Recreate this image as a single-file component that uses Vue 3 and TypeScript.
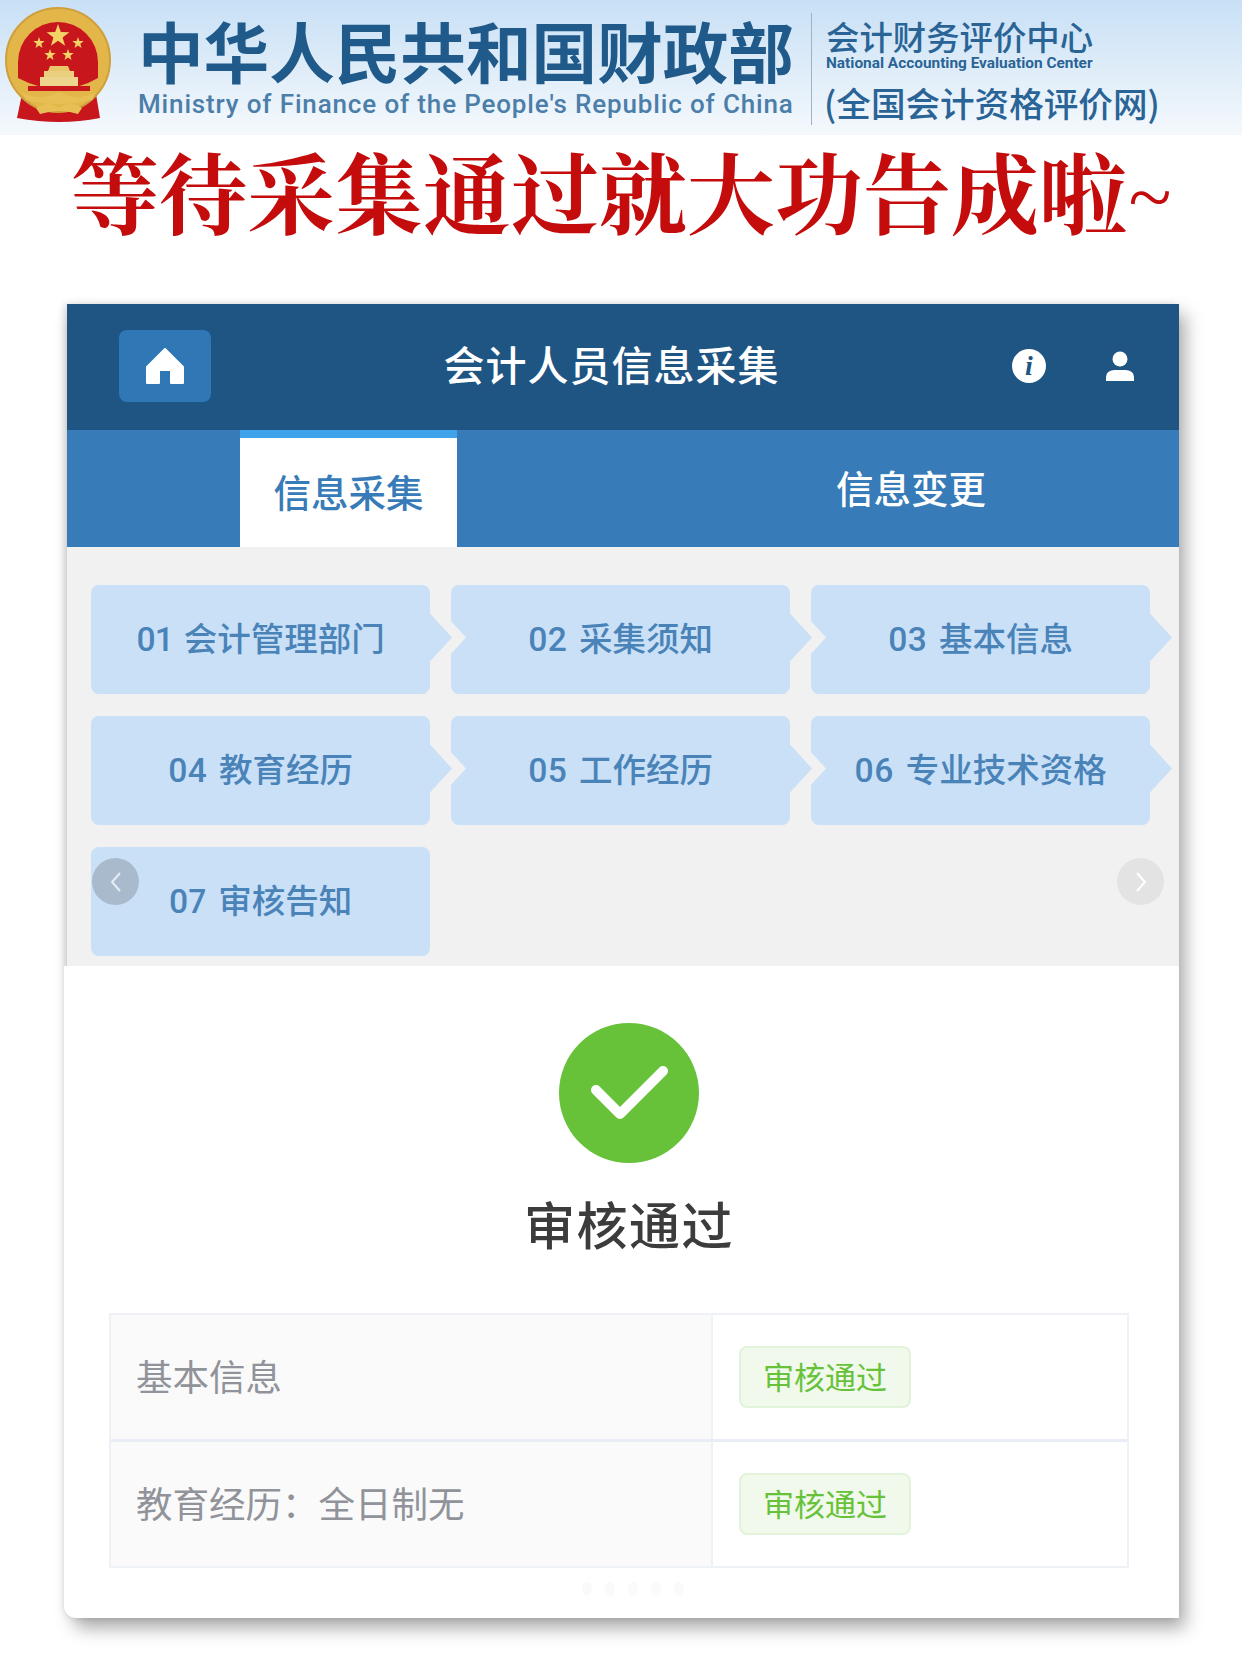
<script setup lang="ts">
const steps: string[] = [
  '01 会计管理部门',
  '02 采集须知',
  '03 基本信息',
  '04 教育经历',
  '05 工作经历',
  '06 专业技术资格',
  '07 审核告知'
]
const rows: string[] = ['基本信息', '教育经历：全日制无']
const smallStars: number[][] = [[39, 43], [78, 43], [50, 55], [68, 55]]
const starPoints = (cx: number, cy: number, r: number): string => {
  const pts: string[] = []
  for (let i = 0; i < 10; i++) {
    const rad = i % 2 === 0 ? r : r * 0.4
    const a = -Math.PI / 2 + (i * Math.PI) / 5
    pts.push(`${(cx + rad * Math.cos(a)).toFixed(1)},${(cy + rad * Math.sin(a)).toFixed(1)}`)
  }
  return pts.join(' ')
}
</script>

<template>
  <div class="page">
    <header class="banner">
      <svg class="emblem" viewBox="0 0 120 125" width="120" height="125" aria-hidden="true">
        <path d="M22 92 L17 116 Q60 124 100 116 L96 92 Z" fill="#c8161d" />
        <circle cx="58" cy="58" r="52" fill="#e3b64a" />
        <circle cx="58" cy="58" r="52" fill="none" stroke="#cf9f3c" stroke-width="2" />
        <path d="M18 60 A40 40 0 1 1 98 60 L98 76 Q60 98 18 76 Z" fill="#c8161d" />
        <polygon :points="starPoints(58, 34, 12)" fill="#f3d266" />
        <polygon v-for="(s, i) in smallStars" :key="i" :points="starPoints(s[0], s[1] - 2, 6)" fill="#f3d266" />
        <path d="M50 64 H68 L70 69 H48 Z" fill="#e9c66a" />
        <rect x="44" y="69" width="30" height="6" fill="#e9cf7e" />
        <rect x="40" y="75" width="38" height="9" fill="#edd58d" />
        <rect x="28" y="84" width="62" height="5" fill="#c8161d" />
        <path d="M22 90 Q40 100 59 90 Q78 100 96 90 L92 98 Q60 106 26 98 Z" fill="#e7bf55" />
        <path d="M36 106 Q48 98 59 106 Q70 98 82 106 L78 112 Q60 106 40 112 Z" fill="#e7bf55" />
      </svg>
      <div class="ministry">
        <div class="ministry-cn">中华人民共和国财政部</div>
        <div class="ministry-en">Ministry of Finance of the People's Republic of China</div>
      </div>
      <div class="divider"></div>
      <div class="center">
        <div class="center-cn">会计财务评价中心</div>
        <div class="center-en">National Accounting Evaluation Center</div>
        <div class="center-net">(全国会计资格评价网)</div>
      </div>
    </header>

    <h1 class="headline">等待采集通过就大功告成啦<span class="tilde">~</span></h1>

    <section class="panel">
      <div class="topbar">
        <div class="home">
          <svg viewBox="0 0 40 38" width="40" height="38" aria-hidden="true">
            <path d="M20 2 L38 20 V36 H26 V23 H14 V36 H2 V20 Z" fill="#fff" stroke="#fff" stroke-width="2" stroke-linejoin="round" />
          </svg>
        </div>
        <div class="app-title">会计人员信息采集</div>
        <div class="info"><span>i</span></div>
        <svg class="user" viewBox="0 0 30 30" width="30" height="30" aria-hidden="true">
          <circle cx="15" cy="8" r="7.5" fill="#fff" />
          <path d="M1 30 V26 Q1 20 9 19 H21 Q29 20 29 26 V30 Z" fill="#fff" />
        </svg>
      </div>

      <div class="tabs">
        <div class="tab-active">信息采集</div>
        <div class="tab-idle">信息变更</div>
      </div>

      <div class="steps">
        <div v-for="(s, i) in steps" :key="s" class="step" :class="{ 'step-end': i === steps.length - 1 }">{{ s }}</div>
        <div class="nav nav-prev">
          <svg viewBox="0 0 12 22" width="12" height="22" aria-hidden="true"><path d="M10 2 L2 11 L10 20" fill="none" stroke="#e8edf3" stroke-width="2" /></svg>
        </div>
        <div class="nav nav-next">
          <svg viewBox="0 0 12 22" width="12" height="22" aria-hidden="true"><path d="M2 2 L10 11 L2 20" fill="none" stroke="#fff" stroke-width="2" /></svg>
        </div>
      </div>

      <div class="result">
        <svg class="ok" viewBox="0 0 140 140" width="140" height="140" aria-hidden="true">
          <circle cx="70" cy="70" r="70" fill="#67c23a" />
          <path d="M37 67 L61 91 L104 48" fill="none" stroke="#fff" stroke-width="10" stroke-linecap="round" stroke-linejoin="round" />
        </svg>
        <div class="result-text">审核通过</div>
        <div class="table">
          <div v-for="r in rows" :key="r" class="row">
            <div class="cell-name">{{ r }}</div>
            <div class="cell-state"><span class="tag">审核通过</span></div>
          </div>
        </div>
        <div class="dots"><i></i><i></i><i></i><i></i><i></i></div>
      </div>
    </section>
  </div>
</template>

<style scoped>
.page {
  width: 1242px;
  height: 1656px;
  background: #fff;
  overflow: hidden;
  font-family: "Noto Sans CJK SC", "Noto Sans", sans-serif;
}
.banner {
  height: 135px;
  display: flex;
  align-items: flex-start;
  background: linear-gradient(180deg, #c8e0f6 0%, #dcebf8 45%, #f5f9fd 100%);
  color: #1f5a8a;
}
.emblem { flex: none; margin: 2px 18px 0 0; }
.ministry { padding-top: 14px; width: 656px; }
.ministry-cn {
  font-size: 65.6px;
  line-height: 72px;
  font-weight: 700;
  white-space: nowrap;
}
.ministry-en {
  font-family: Roboto, sans-serif;
  font-size: 26px;
  line-height: 32px;
  margin-top: 2px;
  font-weight: 500;
  color: #4b7ea8;
  white-space: nowrap;
  letter-spacing: 0.85px;
}
.divider {
  width: 1px;
  height: 112px;
  margin: 13px 14px 0 17px;
  background: #9db3c7;
}
.center { padding-top: 18px; color: #2a6496; white-space: nowrap; }
.center-cn { font-size: 33.4px; line-height: 36px; font-weight: 500; }
.center-en {
  font-family: Roboto, sans-serif;
  font-size: 15.4px;
  line-height: 14px;
  margin-top: 2px;
  font-weight: 700;
}
.center-net { margin-top: 14px; font-size: 34.6px; line-height: 36px; font-weight: 500; margin-left: -2px; }
.headline {
  margin: 0;
  height: 116px;
  padding-left: 71px;
  font-family: "Noto Serif CJK SC", "Noto Sans CJK SC", serif;
  font-size: 88px;
  line-height: 108px;
  font-weight: 700;
  color: #c40c0c;
  white-space: nowrap;
}
.tilde { font-size: 76px; }
.panel {
  width: 1112px;
  height: 1314px;
  margin: 53px 0 0 67px;
  display: flex;
  flex-direction: column;
  background: #fff;
  border-radius: 0 0 0 12px;
  box-shadow: 6px 10px 18px rgba(0, 0, 0, 0.34), -3px 0 6px rgba(0, 0, 0, 0.12);
}
.topbar {
  height: 126px;
  box-sizing: border-box;
  flex: none;
  display: flex;
  align-items: center;
  padding: 0 44px 3px 52px;
  background: #1f5583;
}
.home {
  width: 92px;
  height: 72px;
  display: flex;
  align-items: center;
  justify-content: center;
  border-radius: 8px;
  background: #2f78b5;
}
.app-title {
  flex: 1;
  padding-bottom: 5px;
  text-align: center;
  font-size: 41px;
  line-height: 60px;
  letter-spacing: 1px;
  font-weight: 500;
  color: #fff;
}
.info {
  width: 34px;
  height: 34px;
  margin-right: 59px;
  display: flex;
  align-items: center;
  justify-content: center;
  border-radius: 50%;
  background: #fff;
  color: #1f5583;
  font-family: "Liberation Serif", serif;
  font-style: italic;
  font-weight: 700;
  font-size: 28px;
  line-height: 1;
}
.tabs {
  height: 117px;
  flex: none;
  display: flex;
  padding-left: 173px;
  background: #377bb8;
}
.tab-active {
  width: 217px;
  box-sizing: border-box;
  padding-bottom: 4px;
  border-top: 8px solid #3fa3ec;
  background: #fff;
  display: flex;
  align-items: center;
  justify-content: center;
  font-size: 37.5px;
  font-weight: 500;
  color: #377bb8;
}
.tab-idle {
  flex: 1;
  padding: 0 0 4px 186px;
  display: flex;
  align-items: center;
  justify-content: center;
  font-size: 37.5px;
  font-weight: 500;
  color: #fff;
}
.steps {
  position: relative;
  height: 419px;
  flex: none;
  overflow: hidden;
  padding: 38px 0 9px 24px;
  box-sizing: border-box;
  display: grid;
  grid-template-columns: repeat(3, 339px);
  grid-auto-rows: 109px;
  gap: 22px 21px;
  background: #f1f1f1;
}
.step {
  position: relative;
  padding-bottom: 6px;
  box-sizing: border-box;
  display: flex;
  align-items: center;
  justify-content: center;
  border-radius: 8px;
  background: #c9e0f7;
  color: #4a83b8;
  font-family: Roboto, "Noto Sans CJK SC", sans-serif;
  font-size: 33.5px;
  font-weight: 500;
  font-variant-numeric: proportional-nums;
  word-spacing: 4px;
  white-space: nowrap;
}
.step::before,
.step::after {
  content: "";
  position: absolute;
  top: 50%;
  width: 22px;
  height: 48px;
  margin-top: -26px;
  clip-path: polygon(0 0, 100% 50%, 0 100%);
}
.step::before { left: calc(100% + 14px); background: #f1f1f1; z-index: 1; }
.step::after { left: 100%; background: #c9e0f7; z-index: 2; }
.step-end::before,
.step-end::after { display: none; }
.nav {
  position: absolute;
  top: 311px;
  width: 47px;
  height: 47px;
  display: flex;
  align-items: center;
  justify-content: center;
  border-radius: 50%;
  z-index: 3;
}
.nav-prev { left: 25px; background: #a9bacd; }
.nav-next { left: 1050px; background: #e3e3e3; }
.result {
  position: relative;
  flex: 1;
  margin-left: -3px;
  display: flex;
  flex-direction: column;
  align-items: center;
  padding: 57px 0 0 15px;
  background: #fff;
  border-radius: 0 0 0 12px;
}
.ok { flex: none; }
.result-text {
  margin-top: 30px;
  font-size: 51px;
  line-height: 60px;
  font-weight: 500;
  letter-spacing: 1.5px;
  color: #3c3c3c;
}
.table {
  width: 1020px;
  align-self: flex-start;
  margin: 60px 0 0 30px;
  box-sizing: border-box;
  border: 2px solid #eef1f6;
}
.row {
  height: 124px;
  display: flex;
}
.row + .row { border-top: 3px solid #e9eef6; }
.cell-name {
  width: 602px;
  box-sizing: border-box;
  padding: 0 0 4px 25px;
  display: flex;
  align-items: center;
  background: #fafafa;
  border-right: 2px solid #eef1f6;
  font-size: 36.5px;
  color: #909399;
}
.cell-state {
  flex: 1;
  display: flex;
  align-items: center;
  padding-left: 26px;
}
.tag {
  width: 172px;
  height: 62px;
  box-sizing: border-box;
  padding-bottom: 4px;
  display: flex;
  align-items: center;
  justify-content: center;
  border: 2px solid #e1f3d8;
  border-radius: 8px;
  background: #f0f9eb;
  font-size: 31px;
  color: #67c23a;
}
.dots {
  position: absolute;
  left: 518px;
  top: 616px;
  display: flex;
  gap: 13px;
}
.dots i {
  width: 10px;
  height: 14px;
  border-radius: 50%;
  background: #fafafa;
}
</style>

<style>
html, body { margin: 0; background: #fff; }
</style>
